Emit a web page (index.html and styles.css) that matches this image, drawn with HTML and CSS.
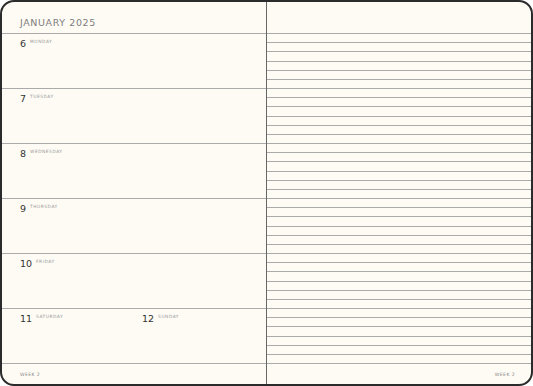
FILE: index.html
```html
<!DOCTYPE html>
<html>
<head>
<meta charset="utf-8">
<link rel="stylesheet" href="styles.css">
</head>
<body>
<div class="book">
  <div class="page left">
    <div class="head"><span class="month">JANUARY 2025</span></div>
    <div class="day"><span class="num">6</span><span class="name">MONDAY</span></div>
    <div class="day"><span class="num">7</span><span class="name">TUESDAY</span></div>
    <div class="day"><span class="num">8</span><span class="name">WEDNESDAY</span></div>
    <div class="day"><span class="num">9</span><span class="name">THURSDAY</span></div>
    <div class="day"><span class="num">10</span><span class="name">FRIDAY</span></div>
    <div class="day weekend">
      <div class="half"><span class="num">11</span><span class="name">SATURDAY</span></div>
      <div class="half"><span class="num">12</span><span class="name">SUNDAY</span></div>
    </div>
    <div class="foot">WEEK 2</div>
  </div>
  <div class="page right">
    <div class="head"></div>
    <div class="lines">
      <div></div><div></div><div></div><div></div><div></div><div></div>
      <div></div><div></div><div></div><div></div><div></div><div></div>
      <div></div><div></div><div></div><div></div><div></div><div></div>
      <div></div><div></div><div></div><div></div><div></div><div></div>
      <div></div><div></div><div></div><div></div><div></div><div></div>
      <div></div><div></div><div></div><div></div><div></div><div></div>
    </div>
    <div class="foot">WEEK 2</div>
  </div>
</div>
</body>
</html>
```

FILE: styles.css
```css
* { box-sizing: border-box; margin: 0; padding: 0; }
html, body { width: 533px; height: 386px; background: #ffffff; overflow: hidden; }
body { font-family: "DejaVu Sans", "Liberation Sans", sans-serif; }
.book {
  width: 533px;
  height: 386px;
  background: #fdfbf4;
  border: 2px solid #2b2b2b;
  border-radius: 14px;
  display: flex;
  overflow: hidden;
}
.page { display: flex; flex-direction: column; height: 100%; }
.left { width: 265px; border-right: 1.5px solid #666; }
.right { flex: 1; }
.head { height: 31px; flex: none; display: flex; align-items: center; padding-left: 18px; }
.month {
  font-size: 9.5px;
  letter-spacing: 0.6px;
  color: #7d7d7d;
  margin-top: 9px;
}
.day {
  height: 55px;
  flex: none;
  border-top: 1px solid #aaa;
  padding: 5px 0 0 18px;
  display: flex;
  align-items: flex-start;
}
.weekend { padding-left: 0; }
.half { width: 122px; padding-left: 18px; display: flex; align-items: flex-start; }
.half + .half { padding-left: 18px; width: 140px; }
.num { font-size: 9.5px; color: #333; line-height: 10px; }
.name {
  font-size: 4.4px;
  letter-spacing: 0.5px;
  color: #999;
  margin-left: 4px;
  line-height: 6px;
}
.foot {
  flex: 1;
  border-top: 1px solid #aaa;
  font-size: 4.6px;
  letter-spacing: 0.4px;
  color: #888;
  padding: 8px 18px 0 18px;
}
.right .foot { text-align: right; padding-right: 16px; }
.lines {
  height: 330px;
  flex: none;
  display: grid;
  grid-template-rows: repeat(36, 1fr);
}
.lines div { border-top: 1px solid #aaa; }
```
